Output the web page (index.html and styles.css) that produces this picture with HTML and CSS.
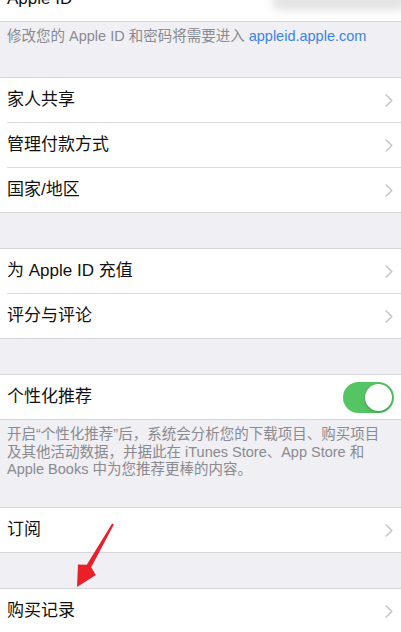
FILE: index.html
```html
<!DOCTYPE html>
<html lang="zh-CN">
<head>
<meta charset="utf-8">
<title>Apple ID 设置</title>
<link rel="stylesheet" href="styles.css">
</head>
<body>
<div class="page">
  <div class="group group-top">
    <div class="row">
      <div class="cell">
        <span class="label">Apple ID</span>
        <span class="blurred"></span>
      </div>
    </div>
  </div>
  <div class="footer footer-one">修改您的 Apple ID 和密码将需要进入 <span class="link">appleid.apple.com</span></div>

  <div class="group">
    <div class="row"><div class="cell"><span class="label">家人共享</span><svg class="chev" viewBox="0 0 8 13"><polyline points="1.2,1 6.8,6.5 1.2,12"/></svg></div></div>
    <div class="row"><div class="cell"><span class="label">管理付款方式</span><svg class="chev" viewBox="0 0 8 13"><polyline points="1.2,1 6.8,6.5 1.2,12"/></svg></div></div>
    <div class="row"><div class="cell"><span class="label">国家/地区</span><svg class="chev" viewBox="0 0 8 13"><polyline points="1.2,1 6.8,6.5 1.2,12"/></svg></div></div>
  </div>
  <div class="spacer"></div>

  <div class="group">
    <div class="row"><div class="cell"><span class="label">为 Apple ID 充值</span><svg class="chev" viewBox="0 0 8 13"><polyline points="1.2,1 6.8,6.5 1.2,12"/></svg></div></div>
    <div class="row"><div class="cell"><span class="label">评分与评论</span><svg class="chev" viewBox="0 0 8 13"><polyline points="1.2,1 6.8,6.5 1.2,12"/></svg></div></div>
  </div>
  <div class="spacer"></div>

  <div class="group">
    <div class="row"><div class="cell cell-toggle"><span class="label">个性化推荐</span><span class="toggle"><span class="knob"></span></span></div></div>
  </div>
  <div class="footer footer-two">开启“个性化推荐”后，系统会分析您的下载项目、购买项目<br>及其他活动数据，并据此在 iTunes Store、App Store 和<br>Apple Books 中为您推荐更棒的内容。</div>

  <div class="group">
    <div class="row"><div class="cell"><span class="label">订阅</span><svg class="chev" viewBox="0 0 8 13"><polyline points="1.2,1 6.8,6.5 1.2,12"/></svg></div></div>
  </div>
  <div class="spacer"></div>

  <div class="group">
    <div class="row"><div class="cell"><span class="label">购买记录</span><svg class="chev" viewBox="0 0 8 13"><polyline points="1.2,1 6.8,6.5 1.2,12"/></svg></div></div>
  </div>

  <svg class="arrow" viewBox="0 0 401 632" width="401" height="632">
    <polygon points="113.9,524.5 91.2,567.2 95.8,575 77,587 78,564.4 86.8,564.8 112.1,523.5"/>
  </svg>
</div>
</body>
</html>
```

FILE: styles.css
```css
html, body {
  margin: 0;
  padding: 0;
  background: #efeff4;
}

body {
  font-family: "Liberation Sans", "Noto Sans CJK SC", sans-serif;
  color: #000;
}

.page {
  position: relative;
  width: 401px;
  height: 632px;
  overflow: hidden;
}

.group {
  background: #fff;
  border-top: 1px solid #d6d6da;
  border-bottom: 1px solid #d6d6da;
}

.group-top {
  margin-top: -23px;
  border-top: none;
}

.row {
  display: flex;
  padding-left: 7px;
}

.cell {
  flex: 1;
  height: 44px;
  display: flex;
  align-items: center;
  justify-content: space-between;
  padding-right: 8px;
}

.row + .row .cell {
  border-top: 1px solid #dcdce0;
}

.label {
  font-size: 17px;
  line-height: 20px;
  color: #111;
}

.chev {
  width: 8px;
  height: 13px;
  fill: none;
  stroke: #c4c4c9;
  stroke-width: 1.5;
  stroke-linecap: round;
  stroke-linejoin: round;
}

.blurred {
  width: 135px;
  height: 16px;
  margin-right: -14px;
  margin-top: 6px;
  background: #e2e2e4;
  border-radius: 8px;
  filter: blur(5px);
}

.footer {
  color: #8a8a8f;
  font-size: 14.5px;
  padding-left: 7px;
  box-sizing: border-box;
}

.footer-one {
  height: 55px;
  padding-top: 5px;
  line-height: 18px;
}

.footer-two {
  height: 87px;
  padding-top: 6px;
  line-height: 17.5px;
}

.link {
  color: #3d82e6;
}

.spacer {
  height: 35px;
}

.cell-toggle {
  padding-right: 7px;
}

.toggle {
  width: 51px;
  height: 31px;
  border-radius: 16px;
  background: #55c463;
  display: flex;
  align-items: center;
  justify-content: flex-end;
  padding-right: 2px;
  box-sizing: border-box;
}

.knob {
  width: 27px;
  height: 27px;
  border-radius: 50%;
  background: #fff;
  box-shadow: 0 0 0 0.5px rgba(0, 0, 0, 0.12), 0 2px 3px rgba(0, 0, 0, 0.15);
}

.arrow {
  position: absolute;
  left: 0;
  top: 0;
  pointer-events: none;
}

.arrow polygon {
  fill: #e8202a;
}
```
